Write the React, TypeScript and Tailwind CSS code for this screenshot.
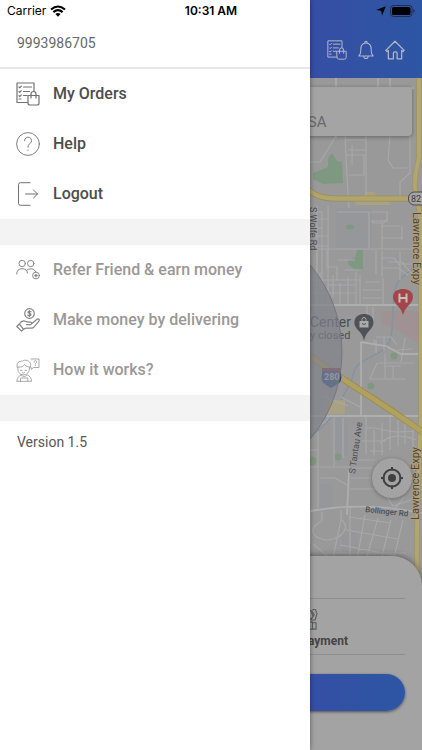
import React from "react";

type IconProps = { className?: string };

const line = {
  fill: "none",
  stroke: "currentColor",
  strokeLinecap: "round" as const,
  strokeLinejoin: "round" as const,
};

function OrdersIcon({ className }: IconProps) {
  return (
    <svg viewBox="0 0 24 24" className={className} strokeWidth="1.2" {...line} aria-hidden="true">
      <path d="M11.5 20.5H1V1h17v8.5" />
      <path d="M7.500 5h8M7.500 9.500h6M7.500 13.500h3.500M3 5l.8.8L5.300 4.200M3 9.500l.8.8 1.500-1.600M3 13.700l.8.8 1.500-1.600M3 17h2" />
      <path d="M12 13.500h11V21a2 2 0 0 1-2 2h-7a2 2 0 0 1-2-2z" />
      <path d="M15 16v-4a2.500 2.500 0 0 1 5 0v4" />
    </svg>
  );
}

function HelpIcon({ className }: IconProps) {
  return (
    <svg viewBox="0 0 24 24" className={className} strokeWidth="0.9" {...line} aria-hidden="true">
      <circle cx="12" cy="12" r="11.400" />
      <path d="M8.500 8.700a3.500 3.500 0 1 1 5.700 2.700c-1.400 1.100-2.200 1.700-2.200 3.600v.3M12 18v.4" />
    </svg>
  );
}

function LogoutIcon({ className }: IconProps) {
  return (
    <svg viewBox="0 0 24 24" className={className} strokeWidth="1" {...line} aria-hidden="true">
      <path d="M14 .7H4.500A2 2 0 0 0 2.500 2.700v18.600a2 2 0 0 0 2 2H14M9.500 12h12M17.500 8l4 4-4 4" />
    </svg>
  );
}

function FriendsIcon({ className }: IconProps) {
  return (
    <svg viewBox="0 0 24 24" className={className} strokeWidth="1" {...line} aria-hidden="true">
      <circle cx="6.200" cy="5.500" r="3.200" />
      <circle cx="14.700" cy="5.500" r="3.200" />
      <path d="M.7 16c0-3.500 2-5.300 5.400-5.300s5.200 1.800 5.400 4.300M11.500 11.700c3.300-1.800 7.500-.8 8.300 2.300" />
      <circle cx="20" cy="17.500" r="3.400" />
      <path d="M18.800 17.500h2.400M20 16.300v2.400" strokeWidth="1.300" />
    </svg>
  );
}

function HandMoneyIcon({ className }: IconProps) {
  return (
    <svg viewBox="0 0 24 24" className={className} strokeWidth="1.200" {...line} aria-hidden="true">
      <circle cx="13.500" cy="5.500" r="4.800" />
      <path d="M15 3.800c-1.500-1-3.200-.5-3 .6.200 1.200 3 .8 3 2.300 0 1.200-2 1.500-3.200.5M13.500 2.500v6" />
      <path d="M.8 18.500 3.300 16l4.300 5.300-2 1.800zM3.300 16c2-3 4.300-3.800 6.500-2.500 1.300.8 3 .5 4.700.6 1.600.1 1.600 2.400 0 2.500h-4M16 15.500l5-4.200c1.500-1.100 2.900.4 1.900 1.800l-5 6c-.6.8-1.400 1-2.400 1H11c-1.500 0-2.200.3-3.400 1.200" />
    </svg>
  );
}

function ThinkingIcon({ className }: IconProps) {
  return (
    <svg viewBox="0 0 24 24" className={className} strokeWidth="0.7" {...line} aria-hidden="true">
      <path d="M1.300 9.500C-.3 5.500 3 2.500 6.500 3.200c2-2.200 8-.8 8.200 3.600.1 1.500-.5 2.500-1 3.200M2 9c3.500.4 5.500-.7 6.500-2.500C10 8.300 12 8.800 13.500 9M2 9.500c-.6 4.300 1.500 7 5 7.300 4 .3 6.700-2.800 6.500-7M4.500 12.300h1.700M9 12.300h1.700M6.500 14.800c1 .4 1.600.2 2.200-.1" />
      <path d="M15 1h8v8.500h-5.500l-2.300 1.800V9.500L14.500 9M18 4c0-2 3-1.800 2.700 0-.2 1-1.300 1-1.300 2.200M19.400 7.500v.2" />
      <path d="M1 23.300c0-3 1.200-5 4-6.300M1 23.300h14.500c0-3.200-1.400-5-4-6.300M5 17c1.400 2 4.700 2 6 0M4.500 20.500v2.800M11.800 20.500v2.800M5 20h6.500" />
    </svg>
  );
}

function BellIcon({ className }: IconProps) {
  return (
    <svg viewBox="0 0 20 24" className={className} strokeWidth="1.300" {...line} aria-hidden="true">
      <path d="M1 19.500c2-1.500 2.500-3 2.500-8C3.500 6 6.200 3.200 10 3.200s6.500 2.800 6.500 8.300c0 5 .5 6.500 2.500 8zM8.500 3.200V2.500a1.500 1.500 0 0 1 3 0v.7M7.300 19.700c.2 4 5.200 4 5.400 0" />
    </svg>
  );
}

function HomeIcon({ className }: IconProps) {
  return (
    <svg viewBox="0 0 24 24" className={className} strokeWidth="1.500" {...line} aria-hidden="true">
      <path d="m1 12.500 11-11 11 11-1.300 1.300-1.700-1.300v10h-5.500v-6.700c0-1-.6-1.500-1.500-1.500h-1.400c-1 0-1.500.5-1.500 1.500v6.700H4v-10l-1.700 1.300z" />
    </svg>
  );
}

function PaymentIcon({ className }: IconProps) {
  return (
    <svg viewBox="0 0 16 24" className={className} strokeWidth="1.200" {...line} aria-hidden="true">
      <path d="M1 2h7l3 4-3 5H3zM9 1l3-1 2 5-2 7H8M8 4l2 4-3 3M1 14h8v8H1zM9 15h4v7H9M4 17l2 2" />
    </svg>
  );
}

function MapCanvas() {
  return (
    <svg
      viewBox="0 78 422 510"
      preserveAspectRatio="xMaxYMin slice"
      className="absolute inset-0 h-full w-full bg-[#99999a]"
      role="img"
      aria-label="Map"
    >
      <path d="M336 208h36v40h-36zM334 416h14v40h-14zM320 484h13v24h-13zM342 532h16v20h-16z" fill="#95979b" />
      <path d="M381 311h38v33l-23-15-15-6z" fill="#a09293" />
      <g fill="#7f9881">
        <path d="m313 173 15-6v-9l4-5 5 8 5 1 1 21-20 1-10-5z" />
        <path d="M357 250h6v19h-9l-6-5v-4l7-2z" />
        <ellipse cx="350" cy="227" rx="4" ry="2.500" />
        <circle cx="394" cy="356" r="3.500" />
        <circle cx="371" cy="386" r="3.500" />
        <circle cx="338" cy="457" r="3.500" />
        <circle cx="312" cy="461" r="4.500" />
      </g>
      <path d="M354 200q8-2 12-8h8l5 7q12 0 12 6h-35zM325 400h20v14h-20z" fill="#a8a182" />
      <g fill="none" stroke="#8493a0" strokeWidth="1.500">
        <path d="M422 262c-8 6-18 12-24 20-5 8-4 16-5 26-1 12 1 26-6 38-8 9-20 11-29 19-5 5-5 12-7 17l-10 18M332 416c-6 8-12 14-22 20" />
        <path d="M422 446l-7 8 4 10-4 8 4 10v18" />
      </g>
      <g fill="none" stroke="#a8a8a9" strokeWidth="1.200">
        <path d="M310 162h10l16-26M345 136l2 40 2 32M348 150h18M346 155h18v20h-15M352 145v20M366 136v60M390 136l-2 24 5 8h15M410 136v37l-10 9v14M346 140h20" />
        <path d="M310 212h12v94M310 219h18M328 206v104M317 206v100M310 236h18M310 246h18M310 228h12M337 212h32v36M371 212h16v9h-16M371 221l3 2h10l3-4" />
        <path d="M382 221v28M382 226h18M382 238h20M402 226v14M310 249h108M317 249v24l-7 8M327 249v18h10v14M337 260h18M345 270h14M376 250v24M382 251v26M382 258h12l6 8v14M382 268h16l10 7M400 252v12h18" />
        <path d="M310 280h50M320 272v14M328 285h28M333 275v22M340 283v22M348 277v28M356 272v34M310 293h45M360 275v30M365 282h15M363 290h18M363 298h18M383 278v28M388 262h14l10 12" />
        <path d="M367 305v12M373 307v15M376 337h15l6 8M374 345v-6M376 340v13M384 337v14M377 363h38M377 363l-7 16h36M385 354v25M393 366v13M385 366h16M405 338l-4 24M397 350l15-1M341 397l19 10M322 396l26 10" />
        <path d="M310 429l15-7 6-8M318 432v76M334 418v48M310 450h8M310 467h40M320 478h15l14 8M343 418v40M366 415v39M374 430v25M382 423v32M390 416v34M366 428h10M362 441h24M370 451h14M398 420v26M405 422v22M413 429v21M355 460h20M352 468h20M351 478h20M350 489h27M376 428c15 4 20 5 38 3M380 443c10-9 24-8 37-3" />
        <path d="M322 512v9c-10 5-12 11-5 16 7 4 16 4 24-2 6-7 6-10 0-16v-9M341 520l-8 38M350 507v55M365 515l-8 45M378 518l-12 42M391 520l-10 40M403 520l-10 42M349 517l42 6M346 530l52 9M340 545l54 10M326 553h80M310 510v45M313 544l17 14M385 494l8 12 18-6M394 510l10-13" />
      </g>
      <g fill="none" stroke="#adaeae" strokeWidth="1.800">
        <path d="M310 305h112M361 342v75M361 342l25 4 15 8h21M349 470l-2 45M310 416h112M310 511c34-6 72-6 112 2" />
        <path d="M336 78v60M378 78v12M390 78v10h24" strokeWidth="1.400" />
      </g>
      <g fill="none">
        <path d="M419 78v80q-5 20-4 30 5 20 6 40v190c-2 40-5 90-4 170" stroke="#9f9462" strokeWidth="5.500" />
        <path d="M419 78v80q-5 20-4 30 5 20 6 40v190c-2 40-5 90-4 170" stroke="#b1a570" strokeWidth="4" />
        <path d="M304 184q8 14 30 14.500h82" stroke="#9b8e58" strokeWidth="6" />
        <path d="M304 184q8 14 30 14.500h82" stroke="#b1a56c" strokeWidth="4.500" />
        <path d="m310 356 30 21 52 34 32 22" stroke="#9a8c51" strokeWidth="6.500" />
        <path d="m310 356 30 21 52 34 32 22" stroke="#b0a160" strokeWidth="5" />
        <path d="m372 394 30 20" stroke="#a08f50" strokeWidth="1" />
      </g>
      <path d="M322 370h19v4q2 8-5 11l-5 3-5-3q-6-3-4-11z" fill="#264b88" />
      <path d="M322 368h19v3h-19z" fill="#8c414d" />
      <text x="324" y="380" fontSize="9" fontWeight="700" fill="#c5c7ca">280</text>
      <g fill="#4b4e53">
        <text x="310" y="327" fontSize="14">Center</text>
        <text x="310" y="339" fontSize="11">y closed</text>
        <text transform="translate(310 207) rotate(90)" fontSize="9">S Wolfe Rd</text>
        <text transform="translate(355 474) rotate(-82)" fontSize="9">S Tantau Ave</text>
        <text transform="translate(365 512) rotate(6)" fontSize="8" fontWeight="500">Bollinger Rd</text>
      </g>
      <g fill="#5a4023" stroke="#a9a288" strokeWidth="1.500" paintOrder="stroke" fontSize="11">
        <text transform="translate(413 212) rotate(90)">Lawrence Expy</text>
        <text transform="translate(419 520) rotate(-90)">Lawrence Expy</text>
      </g>
      <circle cx="207" cy="352" r="135" fill="#80808a" fillOpacity="0.7" stroke="#77777f" />
      <path d="M364 341q-1-6-5-10c-8-7-5-17 5-17s13 10 5 17q-4 4-5 10z" fill="#4f5357" />
      <path d="M359.500 321h9v6.500h-9z" fill="#a9abad" />
      <path d="M362 321v-1.500a2 2 0 0 1 4 0v1.500" fill="none" stroke="#a9abad" />
      <path d="M362 323.500q2 2 4 0" fill="none" stroke="#4f5357" />
      <path d="M403 315q-1-5-5-9c-9-8-5-17 5-17s14 9 5 17q-4 4-5 9z" fill="#a4454a" />
      <path d="M399.500 293.500v9M406.500 293.500v9M399.500 298h7" fill="none" stroke="#c6bfc0" strokeWidth="2" />
      <rect x="408.500" y="192" width="20" height="13" rx="6" fill="#a6a6a4" stroke="#484848" />
      <text x="411" y="202" fontSize="9" fill="#3b3b3b">82</text>
    </svg>
  );
}

function StatusBar() {
  return (
    <div className="absolute inset-x-0 top-0 z-20 grid h-[22px] grid-cols-3 items-center px-[7px] font-[Inter,sans-serif] text-xs text-black">
      <div className="flex items-center gap-1">
        <span>Carrier</span>
        <svg viewBox="0 0 16 12" className="h-[12px] w-[16px]" aria-hidden="true">
          <path d="M1 4.500q7-6 14 0M3.400 7.100q4.600-4 9.200 0" fill="none" stroke="currentColor" strokeWidth="2.100" />
          <path d="M5.400 9q2.600-2 5.200 0L8 11.700z" fill="currentColor" />
        </svg>
      </div>
      <span className="text-center font-semibold">10:31 AM</span>
      <div className="flex items-center justify-end gap-1">
        <svg viewBox="0 0 10 10" className="h-[10px] w-[10px]" aria-hidden="true">
          <path d="M9.800.2 6 9.800 5.300 4.700.2 4z" fill="currentColor" />
        </svg>
        <svg viewBox="0 0 25 12" className="h-[12px] w-[25px]" aria-hidden="true">
          <rect x=".5" y=".5" width="21.500" height="11" rx="3" fill="none" stroke="#1e2c57" />
          <rect x="2" y="2" width="18.500" height="8" rx="1.500" fill="currentColor" />
          <path d="M23.300 4v4q1.400-.5 1.400-2t-1.400-2" fill="#1e2c57" />
        </svg>
      </div>
    </div>
  );
}

function MenuItem({ icon: Icon, label, muted = false }: { icon: React.FC<IconProps>; label: string; muted?: boolean }) {
  return (
    <li>
      <button
        type="button"
        className={`flex h-[50px] w-full items-center gap-[13px] pl-4 text-left text-base font-medium ${muted ? "text-[#9c9797]" : "text-[#4e4c4c]"}`}
      >
        <Icon className={`h-6 w-6 shrink-0 ${muted ? "text-[#858585]" : "text-[#717171]"}`} />
        {label}
      </button>
    </li>
  );
}

function Drawer() {
  return (
    <aside className="absolute inset-y-0 left-0 z-10 w-[310px] bg-white shadow-[0_0_5px_rgba(0,0,0,0.45)]">
      <p className="flex h-[69px] items-end border-b-2 border-[#e6e6e6] px-[17px] pb-3.5 text-sm text-[#686868]">9993986705</p>
      <nav aria-label="Main menu">
        <ul>
          <MenuItem icon={OrdersIcon} label="My Orders" />
          <MenuItem icon={HelpIcon} label="Help" />
          <MenuItem icon={LogoutIcon} label="Logout" />
        </ul>
        <div className="h-[26px] bg-[#f3f3f3]" />
        <ul>
          <MenuItem icon={FriendsIcon} label="Refer Friend & earn money" muted />
          <MenuItem icon={HandMoneyIcon} label="Make money by delivering" muted />
          <MenuItem icon={ThinkingIcon} label="How it works?" muted />
        </ul>
        <div className="h-[26px] bg-[#f3f3f3]" />
      </nav>
      <p className="px-[17px] pt-[11px] text-sm text-[#555]">Version 1.5</p>
    </aside>
  );
}

export default function App() {
  return (
    <div className="relative flex min-h-screen flex-col overflow-hidden bg-[#99999a] font-[Roboto,sans-serif]">
      <StatusBar />
      <header className="flex h-[78px] items-end justify-end gap-[11px] bg-gradient-to-r from-[#4538a5] to-[#2d56a4] pb-[18px] pr-[17px] text-[#b3b7c5]">
        <button type="button" aria-label="Orders"><OrdersIcon className="h-5 w-5" /></button>
        <button type="button" aria-label="Notifications"><BellIcon className="h-5 w-4" /></button>
        <button type="button" aria-label="Home"><HomeIcon className="h-5 w-5" /></button>
      </header>

      <main className="relative flex flex-1 flex-col justify-between px-[10px] pb-[90px] pt-[9px]">
        <MapCanvas />
        <input
          aria-label="Delivery address"
          readOnly
          value="USA"
          className="relative h-[49px] w-full rounded bg-[#a4a4a4] pl-[288px] pt-5 text-[15px] text-[#686868] shadow-[0_1px_4px_rgba(0,0,0,0.35)] outline-none"
        />
        <button
          type="button"
          aria-label="My location"
          className="relative flex h-10 w-10 items-center justify-center self-end rounded-full bg-[#a3a3a3] text-[#404040] shadow-[0_1px_4px_rgba(0,0,0,0.3)]"
        >
          <svg viewBox="0 0 24 24" className="h-6 w-6" fill="none" stroke="currentColor" strokeWidth="2" aria-hidden="true">
            <circle cx="12" cy="12" r="8.500" />
            <circle cx="12" cy="12" r="4" fill="currentColor" stroke="none" />
            <path d="M12 1v3.500M12 19.500V23M1 12h3.500M19.500 12H23" />
          </svg>
        </button>
      </main>

      <section className="relative -mt-8 flex h-[194px] flex-col rounded-t-[30px] bg-[#a3a3a3] px-[17px] pt-[42px] shadow-[0_-1px_6px_rgba(0,0,0,0.4)]">
        <div className="flex h-[57px] justify-end border-y border-[#8d8d8d]">
          <button type="button" className="flex w-[48%] flex-col items-center gap-0.5 pt-2.5 text-xs font-bold text-[#454545]">
            <PaymentIcon className="h-[22px] w-[15px] text-[#5b5b5b]" />
            Add Payment
          </button>
        </div>
        <button
          type="button"
          aria-label="Continue"
          className="mt-[19px] h-[37px] w-full rounded-full bg-gradient-to-r from-[#4538a5] to-[#2d56a4] shadow-[0_1px_3px_rgba(0,0,0,0.5)]"
        />
      </section>

      <Drawer />
    </div>
  );
}
